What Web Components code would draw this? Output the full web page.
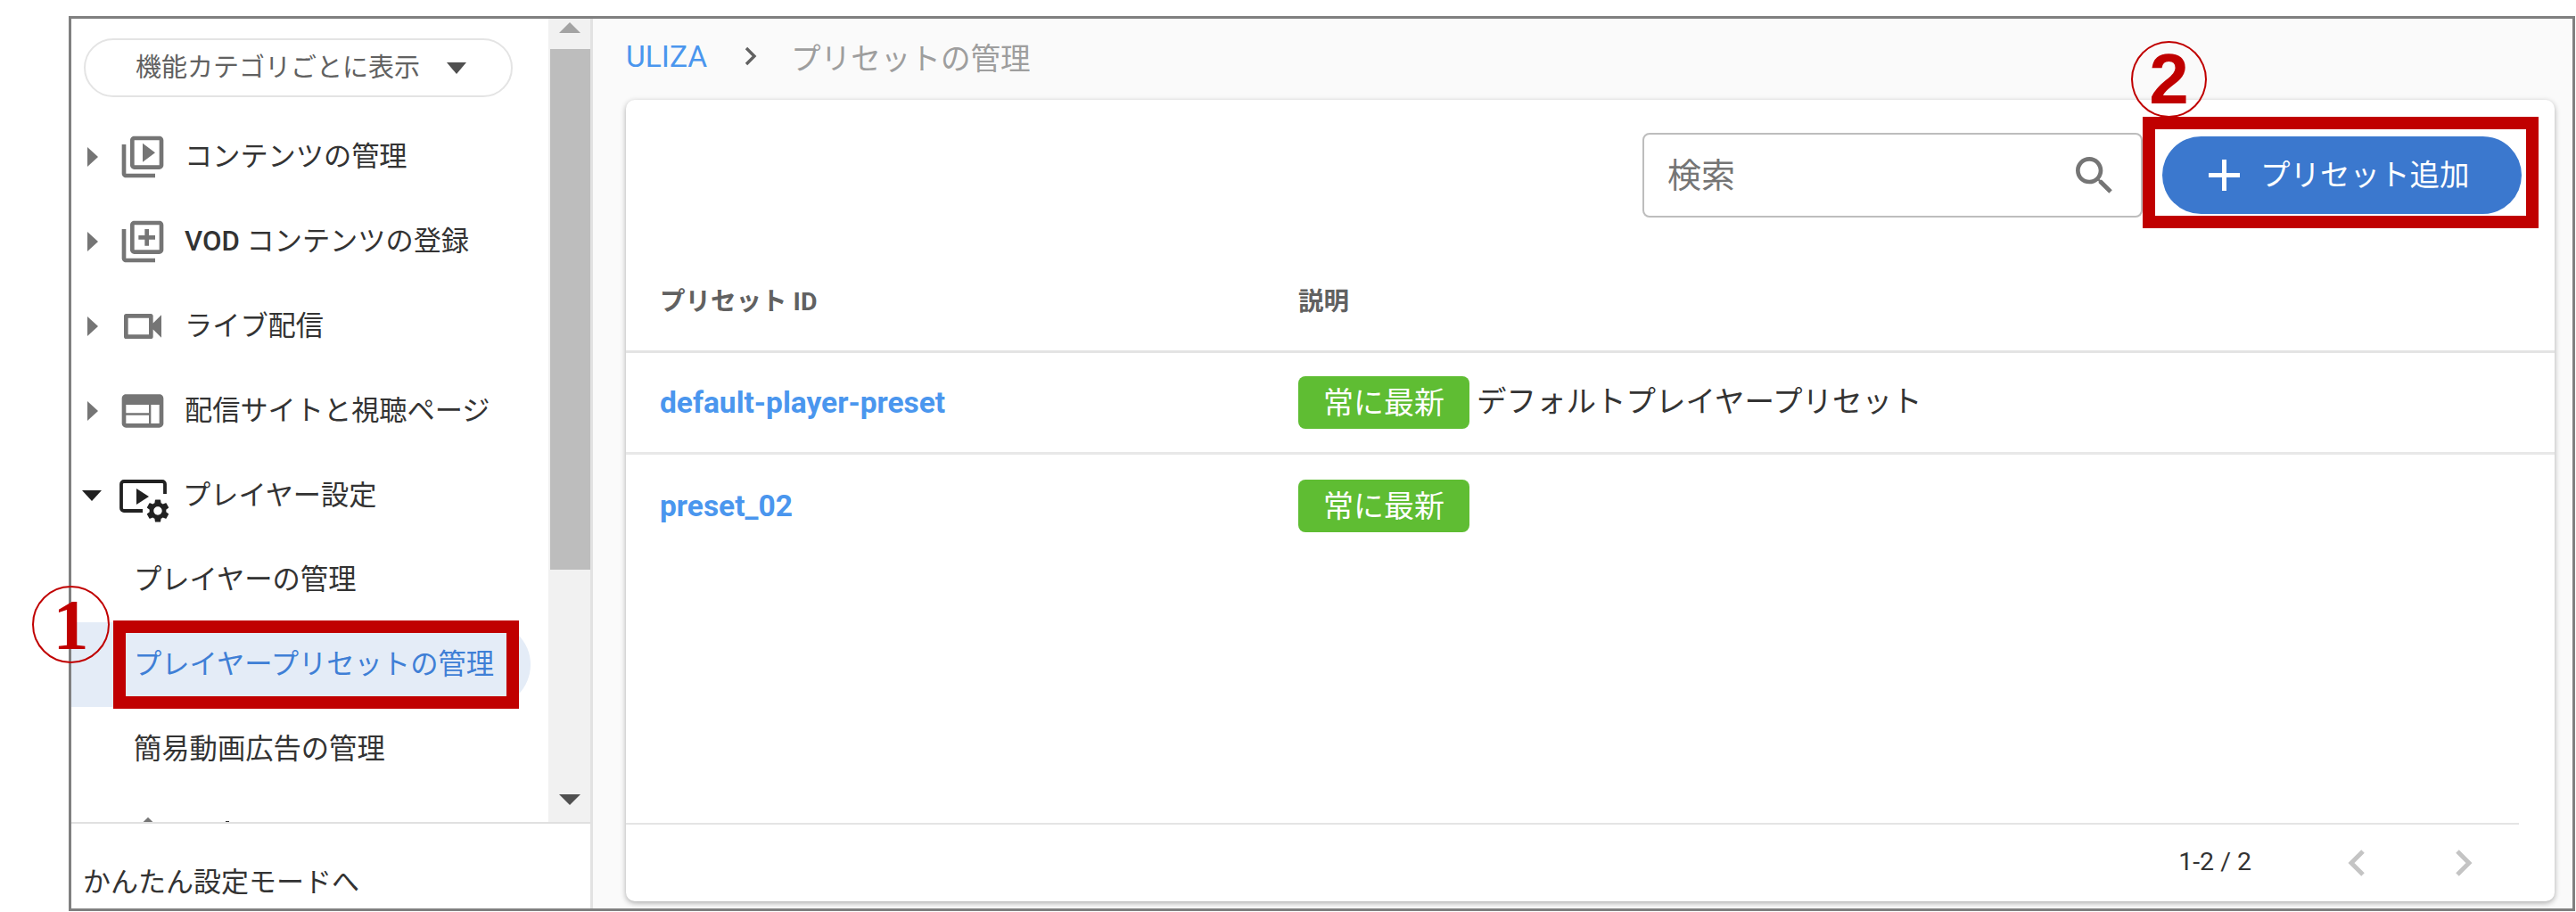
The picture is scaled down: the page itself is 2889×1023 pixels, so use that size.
<!DOCTYPE html>
<html lang="ja">
<head>
<meta charset="utf-8">
<title>プレイヤープリセットの管理</title>
<style>
  html, body { margin: 0; padding: 0; background: #fff; }
  body {
    box-sizing: border-box;
    width: 2889px;
    height: 1023px;
    padding: 18px 1px 1px 77px;
    overflow: hidden;
    position: relative;
    font-family: Roboto, "Noto Sans CJK JP", sans-serif;
  }
</style>
</head>
<body>
<template id="icons">
  <svg data-name="play" viewBox="0 0 24 24"><path d="M4 6H2v14c0 1.1.9 2 2 2h14v-2H4V6zm16-4H8c-1.1 0-2 .9-2 2v12c0 1.1.9 2 2 2h12c1.1 0 2-.9 2-2V4c0-1.1-.9-2-2-2zm0 14H8V4h12v12zM12 14.5l6-4.5-6-4.5v9z"/></svg>
  <svg data-name="add" viewBox="0 0 24 24"><path d="M4 6H2v14c0 1.1.9 2 2 2h14v-2H4V6zm16-4H8c-1.1 0-2 .9-2 2v12c0 1.1.9 2 2 2h12c1.1 0 2-.9 2-2V4c0-1.1-.9-2-2-2zm0 14H8V4h12v12zm-7-2h2v-3h3V9h-3V6h-2v3h-3v2h3z"/></svg>
  <svg data-name="cam" viewBox="0 0 24 24"><path d="M15 8v8H5V8h10m1-2H4c-.55 0-1 .45-1 1v10c0 .55.45 1 1 1h12c.55 0 1-.45 1-1v-3.5l4 4v-11l-4 4V7c0-.55-.45-1-1-1z"/></svg>
  <svg data-name="web" viewBox="0 0 24 24"><path d="M20 4H4c-1.1 0-2 .9-2 2v12c0 1.1.9 2 2 2h16c1.1 0 2-.9 2-2V6c0-1.1-.9-2-2-2zm-5 14H4v-4h11v4zm0-5H4V9h11v4zm5 5h-4V9h4v9z"/></svg>
  <svg data-name="player" viewBox="0 0 56 56"><path d="M30 45H9a3 3 0 0 1-3-3V15a3 3 0 0 1 3-3h43a3 3 0 0 1 3 3v11" fill="none" stroke="#212121" stroke-width="3.8"/><path d="M23 20l14 9-14 9z" fill="#212121"/><g transform="translate(31.4 29.4) scale(1.3)"><path fill="#212121" d="M19.14 12.94c.04-.3.06-.61.06-.94 0-.32-.02-.64-.07-.94l2.03-1.58c.18-.14.23-.41.12-.61l-1.92-3.32c-.12-.22-.37-.29-.59-.22l-2.39.96c-.5-.38-1.03-.7-1.62-.94l-.36-2.54c-.04-.24-.24-.41-.48-.41h-3.84c-.24 0-.43.17-.47.41l-.36 2.54c-.59.24-1.13.57-1.62.94l-2.39-.96c-.22-.08-.47 0-.59.22L2.74 8.87c-.12.21-.08.47.12.61l2.03 1.58c-.05.3-.09.63-.09.94s.02.64.07.94l-2.03 1.58c-.18.14-.23.41-.12.61l1.92 3.32c.12.22.37.29.59.22l2.39-.96c.5.38 1.03.7 1.62.94l.36 2.54c.05.24.24.41.48.41h3.84c.24 0 .44-.17.47-.41l.36-2.54c.59-.24 1.13-.56 1.62-.94l2.39.96c.22.08.47 0 .59-.22l1.92-3.32c.12-.22.07-.47-.12-.61l-2.01-1.58zM12 15.6c-1.98 0-3.6-1.62-3.6-3.6s1.62-3.6 3.6-3.6 3.6 1.62 3.6 3.6-1.62 3.6-3.6 3.6z"/></g></svg>
  <svg data-name="tip" viewBox="0 0 24 24" style="transform: translate(6px, 4px)"><path d="M12 2l10 10-10 10L2 12z"/></svg>
</template>

<app-shell>
  <side-nav slot="side">
    <nav-item icon="play">コンテンツの管理</nav-item>
    <nav-item icon="add"><span style="font-weight: 500">VOD</span> コンテンツの登録</nav-item>
    <nav-item icon="cam">ライブ配信</nav-item>
    <nav-item icon="web">配信サイトと視聴ページ</nav-item>
    <nav-item icon="player" open>プレイヤー設定</nav-item>
    <sub-item>プレイヤーの管理</sub-item>
    <sub-item active>プレイヤープリセットの管理</sub-item>
    <sub-item>簡易動画広告の管理</sub-item>
    <nav-item icon="tip" clipped></nav-item>
  </side-nav>

  <crumb-bar slot="main" root="ULIZA" current="プリセットの管理"></crumb-bar>
  <preset-card slot="main">
    <search-box slot="tools" placeholder="検索"></search-box>
    <add-button slot="tools">プリセット追加</add-button>
    <preset-row name="default-player-preset" desc="デフォルトプレイヤープリセット"></preset-row>
    <preset-row name="preset_02"></preset-row>
  </preset-card>
</app-shell>

<call-out num="1" x="127" y="696" w="455" h="99" cx="36" cy="657" cw="87" ch="87" face="'Liberation Serif'"></call-out>
<call-out num="2" x="2403" y="131" w="444" h="125" cx="2390" cy="46" cw="85" ch="86" face="'Liberation Sans'"></call-out>

<script>
const CJK = 'Roboto, "Noto Sans CJK JP", sans-serif';

function iconSvg(name) {
    const src = document.getElementById("icons").content.querySelector(`[data-name="${name}"]`);
    return src ? src.outerHTML : "";
}

class AppShell extends HTMLElement {
    constructor() {
        super();
        this.attachShadow({ mode: "open" });
        this.shadowRoot.innerHTML = `
            <style>
                :host {
                    display: grid;
                    grid-template-columns: 585px 1fr;
                    box-sizing: border-box;
                    height: 1004px;
                    border: 3px solid #808080;
                    font-family: ${CJK};
                    background: #fafafa;
                    overflow: hidden;
                }
                .main {
                    display: flex;
                    flex-direction: column;
                    padding: 0 20px 8px 37px;
                    min-width: 0;
                }
            </style>
            <slot name="side"></slot>
            <div class="main"><slot name="main"></slot></div>
        `;
    }
}

class SideNav extends HTMLElement {
    constructor() {
        super();
        this.attachShadow({ mode: "open" });
        this.shadowRoot.innerHTML = `
            <style>
                :host {
                    display: flex;
                    flex-direction: column;
                    background: #fff;
                    border-right: 3px solid #e2e2e2;
                    min-height: 0;
                }
                .body {
                    display: flex;
                    height: 903px;
                    border-bottom: 2px solid #e0e0e0;
                    box-sizing: border-box;
                }
                .scroll {
                    flex: 1;
                    min-width: 0;
                    overflow: hidden;
                    padding: 22px 20px 0 0;
                }
                .pill {
                    display: flex;
                    align-items: center;
                    justify-content: center;
                    gap: 30px;
                    box-sizing: border-box;
                    width: 481px;
                    height: 66px;
                    margin: 0 0 19px 14px;
                    border: 2px solid #e4e4e4;
                    border-radius: 33px;
                    color: #616161;
                    font-size: 29px;
                    padding-left: 6px;
                }
                .pill span { margin-top: -6px; }
                .pill i {
                    width: 0;
                    height: 0;
                    border: 11px solid transparent;
                    border-top: 13px solid #505050;
                    border-bottom: 0;
                }
                .rail {
                    position: relative;
                    width: 47px;
                    background: #f1f1f1;
                    flex: none;
                }
                .thumb {
                    position: absolute;
                    left: 2px;
                    right: 0;
                    top: 34px;
                    height: 584px;
                    background: #bdbdbd;
                }
                .up, .down {
                    position: absolute;
                    left: 12px;
                    width: 0;
                    height: 0;
                    border-left: 12.5px solid transparent;
                    border-right: 12.5px solid transparent;
                }
                .up { top: 4px; border-bottom: 12px solid #a3a3a3; }
                .down { top: 870px; border-top: 12px solid #505050; }
                .foot {
                    flex: 1;
                    padding: 44px 0 0 13px;
                    font-size: 31px;
                    line-height: 44px;
                    color: #333;
                }
            </style>
            <div class="body">
                <div class="scroll">
                    <div class="pill"><span>機能カテゴリごとに表示</span><i></i></div>
                    <slot></slot>
                </div>
                <div class="rail"><div class="up"></div><div class="thumb"></div><div class="down"></div></div>
            </div>
            <div class="foot">かんたん設定モードへ</div>
        `;
    }
}

class NavItem extends HTMLElement {
    constructor() {
        super();
        this.attachShadow({ mode: "open" });
    }

    connectedCallback() {
        const open = this.hasAttribute("open");
        const clipped = this.hasAttribute("clipped");
        this.shadowRoot.innerHTML = `
            <style>
                :host {
                    display: flex;
                    align-items: center;
                    height: 95px;
                    font-size: 31.2px;
                    color: #333;
                }
                .caret {
                    flex: none;
                    width: 0;
                    height: 0;
                    margin-left: 18px;
                    border-top: 11px solid transparent;
                    border-bottom: 11px solid transparent;
                    border-left: 12px solid #757575;
                }
                .caret.open {
                    margin-left: 12px;
                    border-left: 11px solid transparent;
                    border-right: 11px solid transparent;
                    border-top: 12px solid #212121;
                    border-bottom: 0;
                }
                .caret.clipped { visibility: hidden; }
                svg {
                    flex: none;
                    width: 56px;
                    height: 56px;
                    margin: 0 19px 0 22px;
                    fill: #757575;
                    overflow: visible;
                }
                .caret.open + svg { margin-left: 16px; }
                span { margin-top: -6px; white-space: nowrap; }
                .dot {
                    align-self: flex-start;
                    width: 4px;
                    height: 4px;
                    margin: 33px 0 0 46px;
                    background: #333;
                }
            </style>
            <div class="caret ${open ? "open" : ""} ${clipped ? "clipped" : ""}"></div>
            ${iconSvg(this.getAttribute("icon"))}
            ${clipped ? `<div class="dot"></div>` : `<span><slot></slot></span>`}
        `;
    }
}

class SubItem extends HTMLElement {
    constructor() {
        super();
        this.attachShadow({ mode: "open" });
        this.shadowRoot.innerHTML = `
            <style>
                :host {
                    display: flex;
                    align-items: center;
                    box-sizing: border-box;
                    height: 95px;
                    padding: 0 0 6px 70px;
                    font-size: 31.3px;
                    color: #333;
                    border-radius: 0 48px 48px 0;
                    white-space: nowrap;
                }
                :host([active]) {
                    background: #e4ecf7;
                    color: #3f7fd6;
                }
            </style>
            <slot></slot>
        `;
    }
}

class CrumbBar extends HTMLElement {
    constructor() {
        super();
        this.attachShadow({ mode: "open" });
    }

    connectedCallback() {
        this.shadowRoot.innerHTML = `
            <style>
                :host {
                    display: flex;
                    align-items: center;
                    flex: none;
                    box-sizing: border-box;
                    height: 91px;
                    padding-bottom: 7px;
                    font-size: 33.6px;
                    color: #9e9e9e;
                }
                .root { color: #4a96ee; font-size: 33.5px; }
                svg { width: 20px; height: 24px; margin: 0 35px 0 39px; }
            </style>
            <span class="root">${this.getAttribute("root")}</span>
            <svg viewBox="0 0 20 24"><path d="M5 3l9 9-9 9" fill="none" stroke="#616161" stroke-width="3.4"/></svg>
            <span>${this.getAttribute("current")}</span>
        `;
    }
}

class PresetCard extends HTMLElement {
    constructor() {
        super();
        this.attachShadow({ mode: "open" });
        this.shadowRoot.innerHTML = `
            <style>
                :host {
                    display: flex;
                    flex-direction: column;
                    flex: 1;
                    min-height: 0;
                    background: #fff;
                    border-radius: 10px;
                    box-shadow: 0 2px 6px rgba(0, 0, 0, .32);
                }
                .tools {
                    display: flex;
                    justify-content: flex-end;
                    align-items: center;
                    gap: 22px;
                    height: 95px;
                    padding: 37px 37px 35px 0;
                }
                .head {
                    display: grid;
                    grid-template-columns: 716px 1fr;
                    align-items: center;
                    box-sizing: border-box;
                    height: 117px;
                    padding: 0 0 2px 38px;
                    border-bottom: 3px solid #e4e4e4;
                    font-size: 28.5px;
                    font-weight: 700;
                    color: #616161;
                }
                .rows { flex: 1; }
                .foot {
                    display: flex;
                    justify-content: flex-end;
                    align-items: center;
                    box-sizing: border-box;
                    height: 88px;
                    margin-right: 40px;
                    padding: 0 52px 0 0;
                    border-top: 2px solid #e4e4e4;
                    font-size: 28.5px;
                    color: #333;
                }
                .foot span { margin-top: -4px; }
                .foot svg { width: 20px; height: 30px; }
                .prev { margin-left: 108px; }
                .next { margin-left: 100px; }
            </style>
            <div class="tools"><slot name="tools"></slot></div>
            <div class="head"><span>プリセット ID</span><span>説明</span></div>
            <div class="rows"><slot></slot></div>
            <div class="foot">
                <span>1-2 / 2</span>
                <svg class="prev" viewBox="0 0 20 30"><path d="M17 2L4 15l13 13" fill="none" stroke="#c4c4c4" stroke-width="5"/></svg>
                <svg class="next" viewBox="0 0 20 30"><path d="M3 2l13 13L3 28" fill="none" stroke="#c4c4c4" stroke-width="5"/></svg>
            </div>
        `;
    }
}

class SearchBox extends HTMLElement {
    constructor() {
        super();
        this.attachShadow({ mode: "open" });
    }

    connectedCallback() {
        this.shadowRoot.innerHTML = `
            <style>
                :host {
                    display: flex;
                    align-items: center;
                    justify-content: space-between;
                    box-sizing: border-box;
                    width: 561px;
                    height: 95px;
                    padding: 0 24px 0 26px;
                    border: 2px solid #bdbdbd;
                    border-radius: 8px;
                    font-size: 38px;
                    color: #757575;
                }
                span { margin-top: -6px; }
                svg { width: 56px; height: 56px; fill: #757575; }
            </style>
            <span>${this.getAttribute("placeholder")}</span>
            <svg viewBox="0 0 24 24"><path d="M15.5 14h-.79l-.28-.27C15.41 12.59 16 11.11 16 9.5 16 5.91 13.09 3 9.5 3S3 5.91 3 9.5 5.91 16 9.5 16c1.61 0 3.09-.59 4.23-1.57l.27.28v.79l5 4.99L20.49 19l-4.99-5zm-6 0C7.01 14 5 11.99 5 9.5S7.01 5 9.5 5 14 7.01 14 9.5 11.99 14 9.5 14z"/></svg>
        `;
    }
}

class AddButton extends HTMLElement {
    constructor() {
        super();
        this.attachShadow({ mode: "open" });
        this.shadowRoot.innerHTML = `
            <style>
                :host {
                    display: flex;
                    align-items: center;
                    box-sizing: border-box;
                    width: 403px;
                    height: 87px;
                    padding: 0 0 0 52px;
                    border-radius: 44px;
                    background: #3b78ce;
                    color: #fff;
                    font-size: 33.5px;
                    white-space: nowrap;
                }
                span { margin-top: -6px; }
                svg { width: 35px; height: 35px; margin-right: 23px; flex: none; }
            </style>
            <svg viewBox="0 0 35 35"><path d="M17.5 0v35M0 17.5h35" stroke="#fff" stroke-width="5"/></svg>
            <span><slot></slot></span>
        `;
    }
}

class PresetRow extends HTMLElement {
    constructor() {
        super();
        this.attachShadow({ mode: "open" });
    }

    connectedCallback() {
        const desc = this.getAttribute("desc") || "";
        this.shadowRoot.innerHTML = `
            <style>
                :host {
                    display: grid;
                    grid-template-columns: 716px 1fr;
                    align-items: center;
                    box-sizing: border-box;
                    height: 114px;
                    padding-left: 38px;
                    border-bottom: 3px solid #e8e8e8;
                }
                :host(:last-child) { border-bottom: 0; }
                .name { color: #4a96ee; font-size: 33.5px; font-weight: 700; }
                .cell { display: flex; align-items: center; gap: 8px; }
                .badge {
                    display: flex;
                    align-items: center;
                    justify-content: center;
                    box-sizing: border-box;
                    width: 192px;
                    height: 59px;
                    padding-bottom: 4px;
                    border-radius: 8px;
                    background: #5fbd33;
                    color: #fff;
                    font-size: 34px;
                }
                .desc { font-size: 33.5px; color: #333; margin-top: -8px; }
            </style>
            <span class="name">${this.getAttribute("name")}</span>
            <div class="cell"><span class="badge">常に最新</span><span class="desc">${desc}</span></div>
        `;
    }
}

// red annotation drawn over the screenshot: a frame and a numbered ring
class CallOut extends HTMLElement {
    constructor() {
        super();
        this.attachShadow({ mode: "open" });
    }

    connectedCallback() {
        const a = n => this.getAttribute(n);
        this.shadowRoot.innerHTML = `
            <style>
                :host { display: block; position: absolute; left: 0; top: 0; pointer-events: none; }
                .frame {
                    position: absolute;
                    box-sizing: border-box;
                    left: ${a("x")}px;
                    top: ${a("y")}px;
                    width: ${a("w")}px;
                    height: ${a("h")}px;
                    border: 14px solid #c00000;
                }
                .ring {
                    position: absolute;
                    display: flex;
                    align-items: center;
                    justify-content: center;
                    box-sizing: border-box;
                    left: ${a("cx")}px;
                    top: ${a("cy")}px;
                    width: ${a("cw")}px;
                    height: ${a("ch")}px;
                    border: 2px solid #c00000;
                    border-radius: 50%;
                    color: #c00000;
                    font: 700 80px/1 ${a("face")}, sans-serif;
                }
            </style>
            <div class="frame"></div>
            <div class="ring">${a("num")}</div>
        `;
    }
}

customElements.define("app-shell", AppShell);
customElements.define("side-nav", SideNav);
customElements.define("nav-item", NavItem);
customElements.define("sub-item", SubItem);
customElements.define("crumb-bar", CrumbBar);
customElements.define("preset-card", PresetCard);
customElements.define("search-box", SearchBox);
customElements.define("add-button", AddButton);
customElements.define("preset-row", PresetRow);
customElements.define("call-out", CallOut);
</script>
</body>
</html>
